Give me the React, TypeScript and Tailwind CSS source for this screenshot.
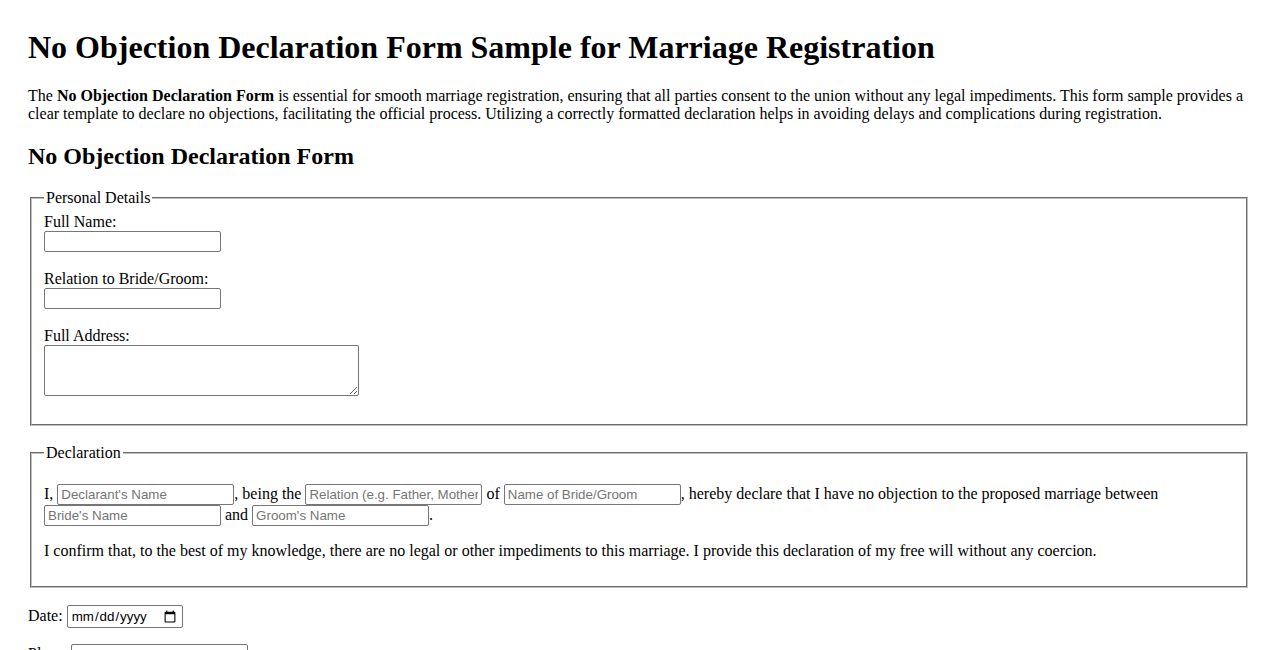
import React from 'react';

const inputCls =
  "w-[177px] bg-white border border-[#767676] rounded-[2px] px-[3px] py-[2px] font-['Liberation_Sans',Arial,sans-serif] text-[13.3333px] leading-[normal] text-black placeholder:text-[#757575] align-baseline";

const fieldsetCls =
  "mx-[2px] border-2 [border-style:groove] border-[#c0c0c0] px-[12px] pb-[10px]";

const App: React.FC = () => {
  return (
    <div className="min-h-screen bg-white text-black font-['Liberation_Serif','Times_New_Roman',serif] text-[16px] leading-[normal] px-[28px] pt-[29px] pb-[30px]">
      <h1 className="text-[32px] font-bold mb-[21.44px]">
        No Objection Declaration Form Sample for Marriage Registration
      </h1>
      <p>
        The <strong className="font-bold">No Objection Declaration Form</strong> is essential for smooth marriage
        registration, ensuring that all parties consent to the union without any legal impediments. This form sample
        provides a clear template to declare no objections, facilitating the official process. Utilizing a correctly
        formatted declaration helps in avoiding delays and complications during registration.
      </p>

      <h2 className="text-[24px] font-bold mt-[19.92px] mb-[18.5px]">No Objection Declaration Form</h2>

      <form onSubmit={(e) => e.preventDefault()}>
        <fieldset className={`${fieldsetCls} pt-[6.6px]`}>
          <legend className="px-[2px]">Personal Details</legend>
          <label htmlFor="fullName">Full Name:</label>
          <br />
          <input id="fullName" type="text" className={inputCls} />
          <br />
          <br />
          <label htmlFor="relation">Relation to Bride/Groom:</label>
          <br />
          <input id="relation" type="text" className={inputCls} />
          <br />
          <br />
          <label htmlFor="address">Full Address:</label>
          <br />
          <textarea
            id="address"
            rows={3}
            className="w-[315px] h-[51px] bg-white border border-[#767676] rounded-[2px] px-[2px] py-[2px] font-['Liberation_Mono',monospace] text-[13.3333px] leading-[normal] align-top"
          />
          <br />
          <br />
        </fieldset>

        <fieldset className={`${fieldsetCls} mt-[18px] pt-[5.6px]`}>
          <legend className="px-[2px]">Declaration</legend>
          <p className="mt-[15.5px] mb-[16px]">
            I, <input type="text" placeholder="Declarant's Name" className={inputCls} />, being the{' '}
            <input type="text" placeholder="Relation (e.g. Father, Mother)" className={inputCls} /> of{' '}
            <input type="text" placeholder="Name of Bride/Groom" className={inputCls} />, hereby declare that I have
            no objection to the proposed marriage between{' '}
            <input type="text" placeholder="Bride's Name" className={inputCls} /> and{' '}
            <input type="text" placeholder="Groom's Name" className={inputCls} />.
          </p>
          <p className="my-[16px]">
            I confirm that, to the best of my knowledge, there are no legal or other impediments to this marriage. I
            provide this declaration of my free will without any coercion.
          </p>
        </fieldset>

        <p className="mt-[17px] mb-[16px]">
          <label htmlFor="date">Date:</label>{' '}
          <input
            id="date"
            type="date"
            className="w-[116px] bg-white border border-[#767676] rounded-[2px] px-[3px] py-[2px] font-['Liberation_Sans',Arial,sans-serif] text-[13.3333px] leading-[normal] align-baseline"
          />
        </p>
        <p className="my-[16px]">
          <label htmlFor="place">Place:</label> <input id="place" type="text" className={inputCls} />
        </p>
        <p className="my-[16px]">
          <label htmlFor="signature">Signature:</label> <input id="signature" type="text" className={inputCls} />
        </p>
        <button
          type="submit"
          className="bg-[#efefef] border border-[#767676] rounded-[2px] px-[6px] py-[1px] font-['Liberation_Sans',Arial,sans-serif] text-[13.3333px]"
        >
          Submit Declaration
        </button>
      </form>
    </div>
  );
};

export default App;
